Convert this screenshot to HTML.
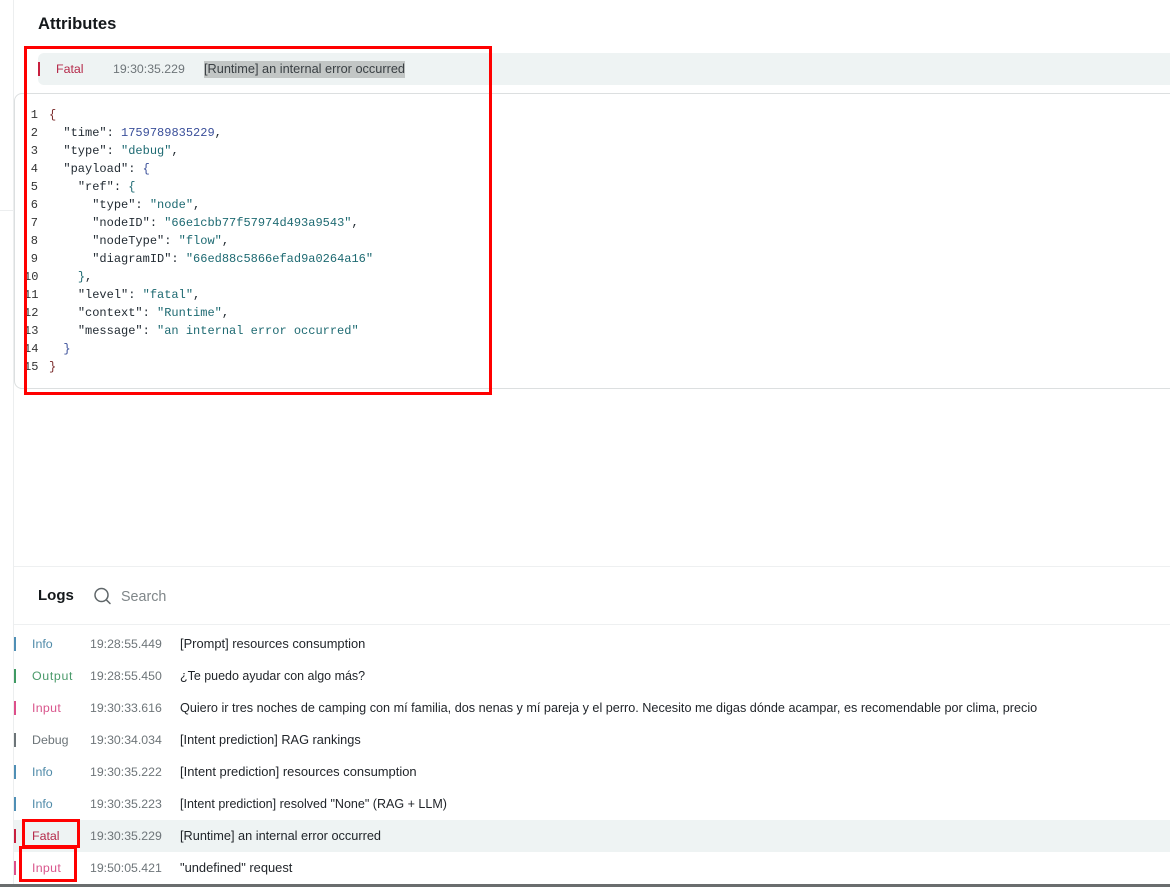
<!DOCTYPE html>
<html><head><meta charset="utf-8"><style>
html,body{margin:0;padding:0;background:#fff}
body{width:1170px;height:887px;position:relative;overflow:hidden;font-family:"Liberation Sans",sans-serif;font-size:12.4px;color:#1f2328}
div,span.a{position:absolute;white-space:pre}
.row{left:14px;width:1156px;height:32px}
.row .bar{left:0;top:9px;width:2px;height:14px}
.row .lv{left:18px;top:8px;line-height:16px}
.row .ts{left:76px;top:8px;line-height:16px;color:#6e7579;font-size:12.3px}
.row .ms{left:166px;top:8px;line-height:16px;font-size:12.68px}
.code{left:24px;top:106px;font-family:"Liberation Mono",monospace;font-size:12px;line-height:18px}
.ln{width:14px;text-align:right;left:0;color:#333}
.cl{left:25px;color:#7a2a2a}
.k{color:#222b33}.s{color:#1e6a72}.n{color:#3a4f9a}.b{color:#7a2a2a}
.red{border:3px solid #f00;box-sizing:border-box}
</style></head><body>
<div style="left:13px;top:0;width:1px;height:887px;background:#eceeef"></div>
<div style="left:0;top:210px;width:13px;height:1px;background:#eceeef"></div>

<div style="left:38px;top:14px;font-size:16.6px;line-height:20px;font-weight:bold;color:#14181b">Attributes</div>
<div style="left:38px;top:53px;width:1132px;height:32px;background:#eef3f3;border-radius:6px 0 0 6px"></div>
<div style="left:38px;top:62px;width:2px;height:14px;background:#c8203f"></div>
<div style="left:56px;top:61px;line-height:16px;color:#b52a4a">Fatal</div>
<div style="left:113px;top:61px;line-height:16px;color:#6e7579;font-size:12.3px">19:30:35.229</div>
<div style="left:204px;top:61px;width:201px;height:17px;background:#c2c6c5"></div>
<div style="left:204px;top:61px;line-height:16px;color:#3a4044;font-size:12.74px">[Runtime] an internal error occurred</div>

<div style="left:14px;top:93px;width:1170px;height:296px;box-sizing:border-box;border:1px solid #dcdfe0;border-radius:8px;background:#fff"></div>

<div class="code" style="width:460px;height:280px">
<div class="ln" style="top:0">1</div><div class="cl" style="top:0"><span class="b">{</span></div>
<div class="ln" style="top:18px">2</div><div class="cl" style="top:18px">  <span class="k">"time"</span><span class="k">: </span><span class="n">1759789835229</span><span class="k">,</span></div>
<div class="ln" style="top:36px">3</div><div class="cl" style="top:36px">  <span class="k">"type": </span><span class="s">"debug"</span><span class="k">,</span></div>
<div class="ln" style="top:54px">4</div><div class="cl" style="top:54px">  <span class="k">"payload": </span><span class="n">{</span></div>
<div class="ln" style="top:72px">5</div><div class="cl" style="top:72px">    <span class="k">"ref": </span><span class="s">{</span></div>
<div class="ln" style="top:90px">6</div><div class="cl" style="top:90px">      <span class="k">"type": </span><span class="s">"node"</span><span class="k">,</span></div>
<div class="ln" style="top:108px">7</div><div class="cl" style="top:108px">      <span class="k">"nodeID": </span><span class="s">"66e1cbb77f57974d493a9543"</span><span class="k">,</span></div>
<div class="ln" style="top:126px">8</div><div class="cl" style="top:126px">      <span class="k">"nodeType": </span><span class="s">"flow"</span><span class="k">,</span></div>
<div class="ln" style="top:144px">9</div><div class="cl" style="top:144px">      <span class="k">"diagramID": </span><span class="s">"66ed88c5866efad9a0264a16"</span></div>
<div class="ln" style="top:162px">10</div><div class="cl" style="top:162px">    <span class="s">}</span><span class="k">,</span></div>
<div class="ln" style="top:180px">11</div><div class="cl" style="top:180px">    <span class="k">"level": </span><span class="s">"fatal"</span><span class="k">,</span></div>
<div class="ln" style="top:198px">12</div><div class="cl" style="top:198px">    <span class="k">"context": </span><span class="s">"Runtime"</span><span class="k">,</span></div>
<div class="ln" style="top:216px">13</div><div class="cl" style="top:216px">    <span class="k">"message": </span><span class="s">"an internal error occurred"</span></div>
<div class="ln" style="top:234px">14</div><div class="cl" style="top:234px">  <span class="n">}</span></div>
<div class="ln" style="top:252px">15</div><div class="cl" style="top:252px"><span class="b">}</span></div>
</div>

<div class="red" style="left:24px;top:46px;width:468px;height:349px"></div>

<div style="left:14px;top:566px;width:1156px;height:1px;background:#eef0f1"></div>
<div style="left:38px;top:586px;font-size:15px;line-height:20px;font-weight:bold;color:#14181b">Logs</div>
<svg style="position:absolute;left:92px;top:586px" width="20" height="20" viewBox="0 0 20 20" fill="none" stroke="#5f6669" stroke-width="1.5"><circle cx="9.5" cy="9" r="6.5"/><path d="M14.3 13.8 L18 17.5" stroke-linecap="round"/></svg>
<div style="left:121px;top:589px;font-size:14.3px;line-height:16px;color:#7f8689">Search</div>
<div style="left:14px;top:624px;width:1156px;height:1px;background:#eef0f1"></div>

<div class="row" style="top:628px"><div class="bar" style="background:#4f8fb5"></div><div class="lv" style="color:#4f8aa8">Info</div><div class="ts">19:28:55.449</div><div class="ms" style="font-size:12.89px">[Prompt] resources consumption</div></div>
<div class="row" style="top:660px"><div class="bar" style="background:#3f9a63"></div><div class="lv" style="color:#4a9a6a;letter-spacing:.65px">Output</div><div class="ts">19:28:55.450</div><div class="ms" style="font-size:12.48px">¿Te puedo ayudar con algo más?</div></div>
<div class="row" style="top:692px"><div class="bar" style="background:#dd4f8a"></div><div class="lv" style="color:#d9558c;letter-spacing:.3px">Input</div><div class="ts">19:30:33.616</div><div class="ms" style="font-size:12.65px">Quiero ir tres noches de camping con mí familia, dos nenas y mí pareja y el perro. Necesito me digas dónde acampar, es recomendable por clima, precio</div></div>
<div class="row" style="top:724px"><div class="bar" style="background:#6c7478"></div><div class="lv" style="color:#6c7478">Debug</div><div class="ts">19:30:34.034</div><div class="ms" style="font-size:12.75px">[Intent prediction] RAG rankings</div></div>
<div class="row" style="top:756px"><div class="bar" style="background:#4f8fb5"></div><div class="lv" style="color:#4f8aa8">Info</div><div class="ts">19:30:35.222</div><div class="ms" style="font-size:12.95px">[Intent prediction] resources consumption</div></div>
<div class="row" style="top:788px"><div class="bar" style="background:#4f8fb5"></div><div class="lv" style="color:#4f8aa8">Info</div><div class="ts">19:30:35.223</div><div class="ms" style="font-size:12.54px">[Intent prediction] resolved "None" (RAG + LLM)</div></div>
<div class="row" style="top:820px;background:#eef3f3"><div class="bar" style="background:#c8203f"></div><div class="lv" style="color:#b52a4a">Fatal</div><div class="ts">19:30:35.229</div><div class="ms" style="font-size:12.74px">[Runtime] an internal error occurred</div></div>
<div class="row" style="top:852px"><div class="bar" style="background:#dd4f8a"></div><div class="lv" style="color:#d9558c;letter-spacing:.3px">Input</div><div class="ts">19:50:05.421</div><div class="ms" style="font-size:12.9px">"undefined" request</div></div>

<div class="red" style="left:22px;top:819px;width:58px;height:29px"></div>
<div class="red" style="left:19px;top:846px;width:58px;height:36px"></div>
<div style="left:0;top:884px;width:1170px;height:3px;background:#6a6d6e"></div>
</body></html>
